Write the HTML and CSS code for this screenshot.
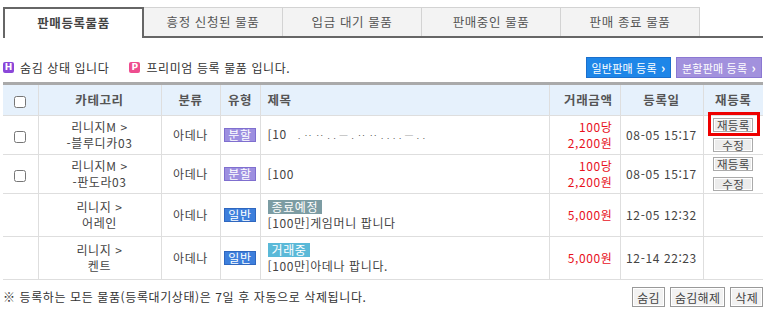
FILE: index.html
```html
<!DOCTYPE html>
<html lang="ko">
<head>
    <meta charset="UTF-8">
    <title>판매등록물품</title>
    <link rel="stylesheet" href="styles.css">
</head>
<body>
    <!-- 상단 탭 -->
    <ul class="tabs">
        <li class="tab on">판매등록물품</li>
        <li class="tab">흥정 신청된 물품</li>
        <li class="tab">입금 대기 물품</li>
        <li class="tab">판매중인 물품</li>
        <li class="tab">판매 종료 물품</li>
    </ul>

    <div class="info-bar">
        <div class="legend">
            <span class="ico ico-h">H</span> 숨김 상태 입니다
            <span class="ico ico-p">P</span> 프리미엄 등록 물품 입니다.
        </div>
        <div class="reg-btns">
            <button class="reg-btn blue">일반판매 등록 <b>›</b></button>
            <button class="reg-btn purple">분할판매 등록 <b>›</b></button>
        </div>
    </div>

    <table class="list">
        <colgroup>
            <col style="width:35px">
            <col style="width:123px">
            <col style="width:59px">
            <col style="width:40px">
            <col style="width:289px">
            <col style="width:71px">
            <col style="width:83px">
            <col style="width:60px">
        </colgroup>
        <thead>
            <tr>
                <th><input type="checkbox" class="chk"></th>
                <th>카테고리</th>
                <th>분류</th>
                <th>유형</th>
                <th class="left">제목</th>
                <th class="right">거래금액</th>
                <th>등록일</th>
                <th>재등록</th>
            </tr>
        </thead>
        <tbody>
            <tr class="short">
                <td><input type="checkbox" class="chk"></td>
                <td>리니지M &gt;<br>-블루디카03</td>
                <td>아데나</td>
                <td><span class="badge split">분할</span></td>
                <td class="left">[10 <span class="broken">. ‥ ‥ .  . ─ . ‥ ‥ .  .  .  . ─  .  .</span></td>
                <td class="right price">100당<br>2,200원</td>
                <td>08-05 15:17</td>
                <td>
                    <div class="btn-col">
                        <span class="mark"><button class="sbtn">재등록</button></span>
                        <button class="sbtn">수정</button>
                    </div>
                </td>
            </tr>
            <tr class="short">
                <td><input type="checkbox" class="chk"></td>
                <td>리니지M &gt;<br>-판도라03</td>
                <td>아데나</td>
                <td><span class="badge split">분할</span></td>
                <td class="left">[100</td>
                <td class="right price">100당<br>2,200원</td>
                <td>08-05 15:17</td>
                <td>
                    <div class="btn-col">
                        <button class="sbtn">재등록</button>
                        <button class="sbtn">수정</button>
                    </div>
                </td>
            </tr>
            <tr class="tall">
                <td></td>
                <td>리니지 &gt;<br>어레인</td>
                <td>아데나</td>
                <td><span class="badge normal">일반</span></td>
                <td class="left"><span class="badge ending">종료예정</span><br>[100만]게임머니 팝니다</td>
                <td class="right price">5,000원</td>
                <td>12-05 12:32</td>
                <td></td>
            </tr>
            <tr class="tall">
                <td></td>
                <td>리니지 &gt;<br>켄트</td>
                <td>아데나</td>
                <td><span class="badge normal">일반</span></td>
                <td class="left"><span class="badge trading">거래중</span><br>[100만]아데나 팝니다.</td>
                <td class="right price">5,000원</td>
                <td>12-14 22:23</td>
                <td></td>
            </tr>
        </tbody>
    </table>

    <div class="foot">
        <p>※ 등록하는 모든 물품(등록대기상태)은 7일 후 자동으로 삭제됩니다.</p>
        <div class="foot-btns">
            <button class="gbtn">숨김</button>
            <button class="gbtn">숨김해제</button>
            <button class="gbtn">삭제</button>
        </div>
    </div>
</body>
</html>
```

FILE: styles.css
```css
:root {
    --line: #dedede;
    --text: #444;
    --red: #e8101c;
}

body {
    margin: 0;
    padding: 7px 7px 0 3px;
    background: #fff;
    color: var(--text);
    font-family: "Noto Sans CJK KR", "DejaVu Sans", sans-serif;
    font-size: 12px;
    line-height: 16px;
    letter-spacing: 0.6px;
}

/* 탭 */
.tabs {
    display: flex;
    list-style: none;
    margin: 0;
    padding: 0;
    width: 760px;
    height: 29px;
    border-bottom: 2px solid #666;
}

.tab {
    width: 139px;
    height: 29px;
    box-sizing: border-box;
    border: 1px solid #d3d3d3;
    border-left: none;
    border-bottom: none;
    background: #f3f3f3;
    text-align: center;
    line-height: 28px;
    font-size: 12.5px;
    color: #555;
}

.tab.on {
    width: 141px;
    height: 31px;
    border: 2px solid #666;
    border-bottom: none;
    background: #fff;
    font-weight: bold;
    color: #444;
    line-height: 27px;
}

/* 안내 + 등록 버튼 */
.info-bar {
    display: flex;
    justify-content: space-between;
    align-items: center;
    width: 760px;
    margin-top: 19px;
    height: 21px;
}

.legend {
    display: flex;
    align-items: center;
    color: #333;
}

.ico {
    display: inline-block;
    width: 11px;
    height: 11px;
    border-radius: 2px;
    color: #fff;
    font-family: "DejaVu Sans", sans-serif;
    font-size: 9px;
    font-weight: bold;
    line-height: 11px;
    text-align: center;
    letter-spacing: 0;
    margin-right: 6px;
}

.ico-h { background: #8b47d9; }
.ico-p { background: #ee4d8f; margin-left: 20px; }

.reg-btns {
    display: flex;
    gap: 5px;
    margin-right: 1px;
}

.reg-btn {
    height: 21px;
    padding: 0;
    border: 1px solid;
    color: #fff;
    font-family: inherit;
    font-size: 11px;
    letter-spacing: 0.2px;
    line-height: 18px;
    white-space: nowrap;
}

.reg-btn b { font-size: 13px; margin-left: 1px; }

.reg-btn.blue { background: #1e86e8; border-color: #1b6fcc; width: 85px; }
.reg-btn.purple { background: #a291dd; border-color: #8b78d2; width: 86px; }

/* 목록 */
.list {
    width: 760px;
    margin-top: 4px;
    border-collapse: collapse;
    table-layout: fixed;
    border-top: 3px solid #aaa;
}

.list th,
.list td {
    border-left: 1px solid var(--line);
    border-bottom: 1px solid var(--line);
    text-align: center;
    padding: 0;
}

.list th:first-child,
.list td:first-child { border-left: none; }

.list th {
    height: 30px;
    background: #e6f1fc;
    color: #555;
    font-weight: bold;
    font-size: 12.5px;
}

.list .left { text-align: left; padding-left: 7px; }
.list .right { text-align: right; padding-right: 7px; }

.short td { height: 38px; }
.tall td { height: 42px; }

.chk {
    width: 12px;
    height: 12px;
    margin: 0;
    vertical-align: middle;
}

.price { color: var(--red); }

.broken {
    font-size: 8px;
    letter-spacing: 1px;
    color: #555;
    margin-left: 8px;
}

.badge {
    display: inline-block;
    padding: 0 3px;
    border: 1px solid;
    color: #fff;
    font-size: 12px;
    line-height: 12px;
}

.badge.split { background: #9d8fe0; border-color: #7f6fcf; }
.badge.normal { background: #3d7fdc; border-color: #2f67bf; }
.badge.ending { background: #7c9ca3; border-color: #7c9ca3; }
.badge.trading { background: #5ab9d8; border-color: #5ab9d8; }

.btn-col {
    display: flex;
    flex-direction: column;
    align-items: center;
    gap: 6px;
}

.sbtn {
    display: block;
    width: 40px;
    height: 14px;
    margin: 0;
    padding: 0;
    border: 1px solid #aaa;
    box-shadow: inset 0 0 0 1px #fff;
    background: #ececec;
    font-family: inherit;
    font-size: 11.5px;
    letter-spacing: 0.3px;
    line-height: 11px;
    color: #444;
}

/* 강조 표시 박스 */
.mark {
    position: relative;
    display: block;
}

.mark::after {
    content: '';
    position: absolute;
    top: -6px;
    bottom: -4px;
    left: -5px;
    right: -7px;
    border: 3px solid #ee0000;
}

/* 하단 */
.foot {
    display: flex;
    justify-content: space-between;
    align-items: center;
    width: 760px;
    margin-top: 7px;
}

.foot p {
    margin: 0;
    color: #333;
}

.foot-btns {
    display: flex;
    gap: 5px;
}

.gbtn {
    height: 20px;
    padding: 0 4px;
    border: 1px solid #999;
    box-shadow: inset 0 0 0 1px #fff;
    background: #f2f2f2;
    font-family: inherit;
    font-size: 12px;
    letter-spacing: 0.3px;
    color: #444;
}
```
